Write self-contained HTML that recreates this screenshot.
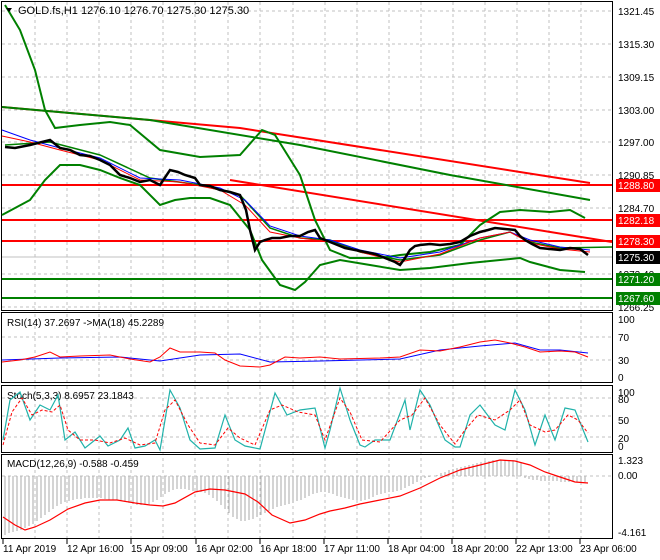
<!DOCTYPE html>
<html><head><meta charset="utf-8"><style>
html,body{margin:0;padding:0;background:#fff;width:660px;height:560px;overflow:hidden}
svg{display:block;font-family:"Liberation Sans",sans-serif;font-size:11px}
</style></head><body>
<svg width="660" height="560" viewBox="0 0 660 560" xmlns="http://www.w3.org/2000/svg">
<rect width="660" height="560" fill="#fff"/>
<!-- grid -->
<g stroke="#c0c0c0" stroke-dasharray="3,3" stroke-width="1">
<path d="M35 2V538M67 2V538M99 2V538M131 2V538M163 2V538M195 2V538M228 2V538M260 2V538M293 2V538M325 2V538M357 2V538M389 2V538M421 2V538M453 2V538M485 2V538M517 2V538M549 2V538M581 2V538"/>
<path d="M2 11H612M2 44H612M2 77H612M2 110H612M2 142H612M2 175H612M2 208H612M2 241H612M2 274H612M2 307H612"/>
<path d="M2 337H612M2 360H612M2 398H612M2 416H612M2 437H612M2 476H612"/>
</g>
<!-- panel borders -->
<g fill="none" stroke="#000" stroke-width="1">
<rect x="1.5" y="1.5" width="611" height="309"/>
<rect x="1.5" y="312.5" width="611" height="70"/>
<rect x="1.5" y="385.5" width="611" height="67"/>
<rect x="1.5" y="454.5" width="611" height="84"/>
</g>
<!-- main chart -->
<line x1="2" y1="257" x2="612" y2="257" stroke="#c0c0c0"/>
<g stroke-width="2" fill="none">
<path d="M2 185H612M2 220H612M2 241H612" stroke="#f00"/>
<path d="M2 279H612M2 298H612" stroke="#008000"/>
<path d="M2 107L240 128L590 183" stroke="#f00"/>
<path d="M230 180L612 242" stroke="#f00"/>
<path d="M2 107L150 120L300 145L450 175L590 200" stroke="#008000"/>
<path d="M5 5L20 30L35 70L45 110L55 128L80 125L110 122L130 125L160 150L200 157L240 155L262 130L275 135L300 175L315 220L330 250L350 258L380 258L400 255L430 252L460 245L480 225L500 212L520 210L550 212L570 210L585 218" stroke="#008000"/>
<path d="M2 215L30 200L45 180L60 165L80 165L100 170L120 178L140 185L160 205L175 200L190 198L210 198L230 205L250 230L262 260L280 285L295 290L305 282L320 265L340 260L370 265L400 270L430 268L470 263L520 258L530 262L560 270L585 272" stroke="#008000"/>
<path d="M5 145L50 142L100 155L150 178L200 185L240 195L270 228L300 238L330 240L360 252L400 260L440 255L480 240L510 232L530 242L560 248L612 247" stroke="#008000" stroke-width="1.5"/>
</g>
<g fill="none" stroke-width="1">
<path d="M2 130L30 140L60 148L100 158L140 178L180 180L220 188L245 200L270 226L300 236L330 240L360 250L400 258L440 252L480 238L510 232L530 240L560 247L590 250" stroke="#00f"/>
<path d="M2 136L30 142L60 150L100 160L140 180L180 182L220 190L245 205L270 232L300 238L330 242L360 252L400 262L440 254L480 238L510 232L530 243L560 249L590 252" stroke="#f00"/>
</g>
<path d="M5 147L15 148L30 145L42 142L50 140L60 148L70 150L80 155L90 156L100 160L110 165L120 175L130 178L140 182L150 180L160 185L170 170L178 172L185 175L195 178L200 185L210 186L220 190L230 192L240 195L246 210L250 230L255 250L260 242L265 240L272 238L280 238L290 236L300 236L308 232L315 230L320 238L325 240L335 244L345 248L355 250L365 252L375 254L385 258L395 262L400 265L405 258L410 250L415 246L420 245L430 244L440 245L450 244L460 242L470 236L480 232L488 230L495 228L505 229L515 230L520 236L525 240L532 244L540 248L550 249L560 250L570 248L580 249L588 255" fill="none" stroke="#000" stroke-width="2.5"/>
<!-- title -->
<path d="M6 8l6 0l-3 4z" fill="#000"/>
<text x="18" y="14" font-size="11">GOLD.fs,H1  1276.10 1276.70 1275.30 1275.30</text>
<!-- price axis -->
<g font-size="10" fill="#000">
<text x="618" y="15">1321.45</text><text x="618" y="48">1315.30</text><text x="618" y="81">1309.15</text><text x="618" y="114">1303.00</text><text x="618" y="146">1297.00</text><text x="618" y="179">1290.85</text><text x="618" y="212">1284.70</text><text x="618" y="278">1272.40</text><text x="618" y="311">1266.25</text>
</g>
<rect x="616" y="179" width="44" height="13" fill="#f00"/><text x="618" y="189" font-size="10" fill="#fff">1288.80</text>
<rect x="616" y="214" width="44" height="13" fill="#f00"/><text x="618" y="224" font-size="10" fill="#fff">1282.18</text>
<rect x="616" y="235" width="44" height="13" fill="#f00"/><text x="618" y="245" font-size="10" fill="#fff">1278.30</text>
<rect x="616" y="251" width="44" height="13" fill="#000"/><text x="618" y="261" font-size="10" fill="#fff">1275.30</text>
<rect x="616" y="273" width="44" height="13" fill="#008000"/><text x="618" y="283" font-size="10" fill="#fff">1271.20</text>
<rect x="616" y="292" width="44" height="13" fill="#008000"/><text x="618" y="302" font-size="10" fill="#fff">1267.60</text>
<!-- RSI -->
<text x="7" y="326" font-size="10">RSI(14) 37.2697   -&gt;MA(18) 45.2289</text>
<path d="M2 360L60 358L120 357L160 361L200 355L240 354L270 362L320 361L400 359L440 350L480 346L515 343L540 350L560 350L588 353" fill="none" stroke="#00f"/>
<path d="M2 362L20 360L35 357L50 352L60 357L80 356L110 355L130 359L150 362L160 357L170 348L180 352L200 352L215 353L225 360L240 366L260 367L270 365L285 357L300 358L320 357L340 359L380 358L400 357L420 350L440 351L460 347L480 342L495 340L510 343L525 347L540 352L560 351L575 352L588 357" fill="none" stroke="#f00"/>
<g font-size="10"><text x="618" y="323">100</text><text x="618" y="341">70</text><text x="618" y="364">30</text><text x="618" y="381">0</text></g>
<!-- Stoch -->
<text x="7" y="399" font-size="10">Stoch(5,3,3) 8.6957 23.1843</text>
<path d="M3 440L10 400L20 392L30 420L40 405L50 410L58 395L65 440L75 432L85 448L100 436L108 446L120 440L128 428L135 448L145 446L155 440L160 450L170 390L180 408L190 440L200 449L215 448L225 415L235 440L245 446L260 449L275 393L287 415L300 410L315 408L325 448L330 430L340 388L350 420L360 445L365 447L375 440L390 440L405 400L410 430L420 390L430 405L445 440L455 447L460 447L470 415L480 405L495 425L505 430L515 390L525 410L535 445L545 415L555 440L565 408L575 410L588 442" fill="none" stroke="#20b2aa" stroke-width="1.2"/>
<path d="M3 445L12 412L22 398L32 415L42 410L52 412L60 405L68 430L80 440L95 440L110 443L125 438L140 445L155 443L165 410L175 400L188 425L200 443L215 445L228 428L240 438L255 445L270 410L282 405L298 412L315 415L325 440L340 398L350 412L362 440L380 442L400 420L412 415L425 398L440 425L455 444L465 430L478 415L495 420L510 410L520 400L530 425L545 432L555 430L568 415L578 420L588 433" fill="none" stroke="#f00" stroke-dasharray="3,2"/>
<g font-size="10"><text x="618" y="396">100</text><text x="618" y="403">80</text><text x="618" y="424">50</text><text x="618" y="442">20</text><text x="618" y="450">0</text></g>
<!-- MACD -->
<text x="7" y="467" font-size="10">MACD(12,26,9) -0.588 -0.459</text>
<g stroke="#aaa" stroke-width="1">
<path d="M5 476V535M9 476V533M13 476V532M17 476V531M21 476V530M25 476V528M29 476V526M33 476V524M37 476V521M41 476V518M45 476V515M49 476V512M53 476V509M57 476V506M61 476V504M65 476V502M69 476V501M73 476V500M77 476V499M81 476V499M85 476V498M89 476V498M93 476V498M97 476V498M101 476V498M105 476V499M109 476V500M113 476V500M117 476V500M121 476V501M125 476V502M129 476V503M133 476V504M137 476V505M141 476V505M145 476V505M149 476V504M153 476V502M157 476V500M161 476V497M165 476V494M169 476V492M173 476V490M177 476V489M181 476V489M185 476V489M189 476V490M193 476V491M197 476V491M201 476V492M205 476V493M209 476V495M213 476V498M217 476V501M221 476V505M225 476V509M229 476V513M233 476V517M237 476V519M241 476V521M245 476V521M249 476V520M253 476V519M257 476V517M261 476V515M265 476V513M269 476V511M273 476V509M277 476V507M281 476V506M285 476V505M289 476V504M293 476V503M297 476V501M301 476V500M305 476V498M309 476V496M313 476V494M317 476V493M321 476V492M325 476V492M329 476V493M333 476V494M337 476V496M341 476V497M345 476V498M349 476V499M353 476V500M357 476V500M361 476V501M365 476V500M369 476V499M373 476V497M377 476V495M381 476V494M385 476V493M389 476V492M393 476V492M397 476V491M401 476V490M405 476V488M409 476V486M413 476V484M417 476V482M421 476V480M425 476V478M429 476V477M433 476V476"/>
<path d="M437 476V475M441 476V473M445 476V472M449 476V470M453 476V469M457 476V468M461 476V467M465 476V466M469 476V465M473 476V464M477 476V463M481 476V462M485 476V461M489 476V461M493 476V460M497 476V460M501 476V460M505 476V460M509 476V460M513 476V460M517 476V461M521 476V462"/>
<path d="M525 476V478M529 476V479M533 476V480M537 476V480M541 476V481M545 476V481M549 476V481M553 476V481M557 476V481M561 476V482M565 476V482M569 476V482M573 476V482M577 476V482M581 476V482M585 476V482"/>
</g>
<path d="M3 517L15 525L25 530L35 527L50 520L68 509L85 503L100 500L117 500L135 503L150 505L163 506L175 503L195 492L210 489L225 490L245 494L258 502L272 515L290 523L305 520L320 514L330 511L345 508L360 504L380 500L400 496L420 488L440 478L460 470L480 465L500 460L515 461L530 465L545 472L560 477L575 482L588 483" fill="none" stroke="#f00" stroke-width="1.2"/>
<g font-size="10"><text x="618" y="464">1.323</text><text x="618" y="479">0.00</text><text x="618" y="536">-4.161</text></g>
<!-- time axis -->
<g stroke="#000"><path d="M3 539V544M67 539V544M131 539V544M196 539V544M260 539V544M324 539V544M388 539V544M452 539V544M516 539V544M580 539V544"/></g>
<g font-size="10">
<text x="3" y="552">11 Apr 2019</text><text x="67" y="552">12 Apr 16:00</text><text x="131" y="552">15 Apr 09:00</text><text x="196" y="552">16 Apr 02:00</text><text x="260" y="552">16 Apr 18:00</text><text x="324" y="552">17 Apr 11:00</text><text x="388" y="552">18 Apr 04:00</text><text x="452" y="552">18 Apr 20:00</text><text x="516" y="552">22 Apr 13:00</text><text x="580" y="552">23 Apr 06:00</text>
</g>
</svg>
</body></html>
